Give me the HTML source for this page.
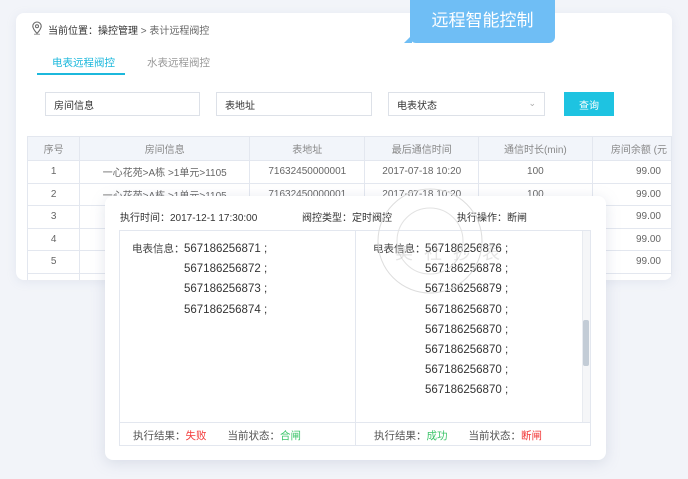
<!DOCTYPE html>
<html><head><meta charset="utf-8"><style>
*{margin:0;padding:0;box-sizing:border-box}
body{width:688px;height:479px;background:#f2f4f9;font-family:"Liberation Sans","Noto Sans CJK SC",sans-serif;position:relative;overflow:hidden;color:#555;font-size:10px}
.card{position:absolute;left:16px;top:13px;width:656px;height:267px;background:#fff;border-radius:8px;box-shadow:0 2px 10px rgba(150,160,190,.15);overflow:hidden}
.abs{position:absolute;white-space:nowrap}
.tag{position:absolute;left:410px;top:0;width:145px;height:43px;background:#6fbef5;border-radius:0 0 6px 6px;color:#fff;font-size:17px;text-align:center;line-height:42px}
.tag:after{content:"";position:absolute;left:-6px;bottom:0;border-right:8px solid #6fbef5;border-top:8px solid transparent}
.inp{position:absolute;top:79px;height:24px;border:1px solid #dde1e8;font-size:10px;color:#333;display:flex;align-items:center;padding-left:8px;padding-top:1px}
table{position:absolute;left:11px;top:123px;border-collapse:collapse;font-size:10px;color:#666}
td{border:1px solid #e3e7ef;height:22.5px;text-align:center;padding:0;vertical-align:middle}
tr.h td{background:#f2f5fa;color:#888;height:24px}
.pop{position:absolute;left:105px;top:196px;width:501px;height:264px;background:#fff;border-radius:8px;box-shadow:0 3px 14px rgba(140,150,180,.25)}
.box{position:absolute;left:14px;top:34px;width:472px;height:216px;border:1px solid #e3e7ef}
.num{font-size:11.5px;color:#333;line-height:20.2px}
</style></head><body>
<div class="card">
  <svg class="abs" style="left:15px;top:8px" width="12" height="14" viewBox="0 0 12 14"><path d="M6 12.5C3 9 1.8 7 1.8 5.2a4.2 4.2 0 0 1 8.4 0C10.2 7 9 9 6 12.5z" fill="none" stroke="#666" stroke-width="1.1"/><circle cx="6" cy="5.2" r="1.5" fill="none" stroke="#666" stroke-width="1"/><path d="M3 13.3h6" stroke="#999" stroke-width="1"/></svg>
  <div class="abs" style="left:32px;top:9px;font-size:10px;color:#333">当前位置：操控管理 <span style="color:#666">&gt; 表计远程阀控</span></div>
  <div class="abs" style="left:36px;top:42px;font-size:10.5px;color:#1cb8dc">电表远程阀控</div>
  <div class="abs" style="left:21px;top:60px;width:88px;height:2px;background:#1cb8dc"></div>
  <div class="abs" style="left:131px;top:42px;font-size:10.5px;color:#999">水表远程阀控</div>
  <div class="inp" style="left:29px;width:155px">房间信息</div>
  <div class="inp" style="left:200px;width:156px">表地址</div>
  <div class="inp" style="left:372px;width:157px">电表状态<span style="position:absolute;right:8px;top:5px;color:#aaa;font-size:9px">&#8964;</span></div>
  <div class="abs" style="left:548px;top:79px;width:50px;height:24px;background:#1ec3e1;color:#fff;display:flex;align-items:center;justify-content:center;padding-top:1px;font-size:10px">查询</div>
  <table>
    <tr class="h"><td style="width:53px">序号</td><td style="width:172px">房间信息</td><td style="width:116px">表地址</td><td style="width:115px">最后通信时间</td><td style="width:115px">通信时长(min)</td><td style="width:80px;text-align:right;padding-right:4px">房间余额 (元</td></tr>
    <tr><td>1</td><td>一心花苑&gt;A栋 &gt;1单元&gt;1105</td><td>71632450000001</td><td>2017-07-18 10:20</td><td>100</td><td style="text-align:right;padding-right:10px">99.00</td></tr>
    <tr><td>2</td><td>一心花苑&gt;A栋 &gt;1单元&gt;1105</td><td>71632450000001</td><td>2017-07-18 10:20</td><td>100</td><td style="text-align:right;padding-right:10px">99.00</td></tr>
    <tr><td>3</td><td></td><td></td><td></td><td></td><td style="text-align:right;padding-right:10px">99.00</td></tr>
    <tr><td>4</td><td></td><td></td><td></td><td></td><td style="text-align:right;padding-right:10px">99.00</td></tr>
    <tr><td>5</td><td></td><td></td><td></td><td></td><td style="text-align:right;padding-right:10px">99.00</td></tr>
    <tr><td>6</td><td></td><td></td><td></td><td></td><td></td></tr>
  </table>
</div>
<div class="tag">远程智能控制</div>
<div class="pop">
  <div class="abs" style="left:15px;top:13px;font-size:10px;color:#333">执行时间：2017-12-1 17:30:00</div>
  <div class="abs" style="left:197px;top:13px;font-size:10px;color:#333">阀控类型：定时阀控</div>
  <div class="abs" style="left:352px;top:13px;font-size:10px;color:#333">执行操作：断闸</div>
  <div class="box">
    <div class="abs" style="left:235px;top:0;width:1px;height:214px;background:#e3e7ef"></div>
    <div class="abs" style="left:0;top:191px;width:470px;height:1px;background:#e3e7ef"></div>
    <div class="abs" style="left:462px;top:0;width:8px;height:191px;background:#f5f6f8;border-left:1px solid #e8ebf0"></div>
    <div class="abs" style="left:463px;top:89px;width:6px;height:46px;background:#c3ccd6;border-radius:2px"></div>
    <div class="abs" style="left:12px;top:10px;font-size:10.5px;color:#444">电表信息：</div>
    <div class="abs num" style="left:64px;top:8px">567186256871 ;<br>567186256872 ;<br>567186256873 ;<br>567186256874 ;</div>
    <div class="abs" style="left:253px;top:10px;font-size:10.5px;color:#444">电表信息：</div>
    <div class="abs num" style="left:305px;top:8px">567186256876 ;<br>567186256878 ;<br>567186256879 ;<br>567186256870 ;<br>567186256870 ;<br>567186256870 ;<br>567186256870 ;<br>567186256870 ;</div>
    <div class="abs" style="left:13px;top:197px;font-size:10.5px;color:#555">执行结果：<span style="color:#f23a3a">失败</span>　　当前状态：<span style="color:#3cc56a">合闸</span></div>
    <div class="abs" style="left:254px;top:197px;font-size:10.5px;color:#555">执行结果：<span style="color:#3cc56a">成功</span>　　当前状态：<span style="color:#f23a3a">断闸</span></div>
  </div>
  <svg class="abs" style="left:270px;top:-10px" width="110" height="110" viewBox="0 0 110 110"><circle cx="55" cy="55" r="52" fill="none" stroke="#ddd" stroke-width="1"/><circle cx="55" cy="55" r="33" fill="none" stroke="#e2e2e2" stroke-width="1"/></svg>
  <div class="abs" style="left:290px;top:43px;font-size:18px;color:rgba(180,180,180,.35);letter-spacing:3px">美 社 抄 表</div>
</div>
</body></html>
